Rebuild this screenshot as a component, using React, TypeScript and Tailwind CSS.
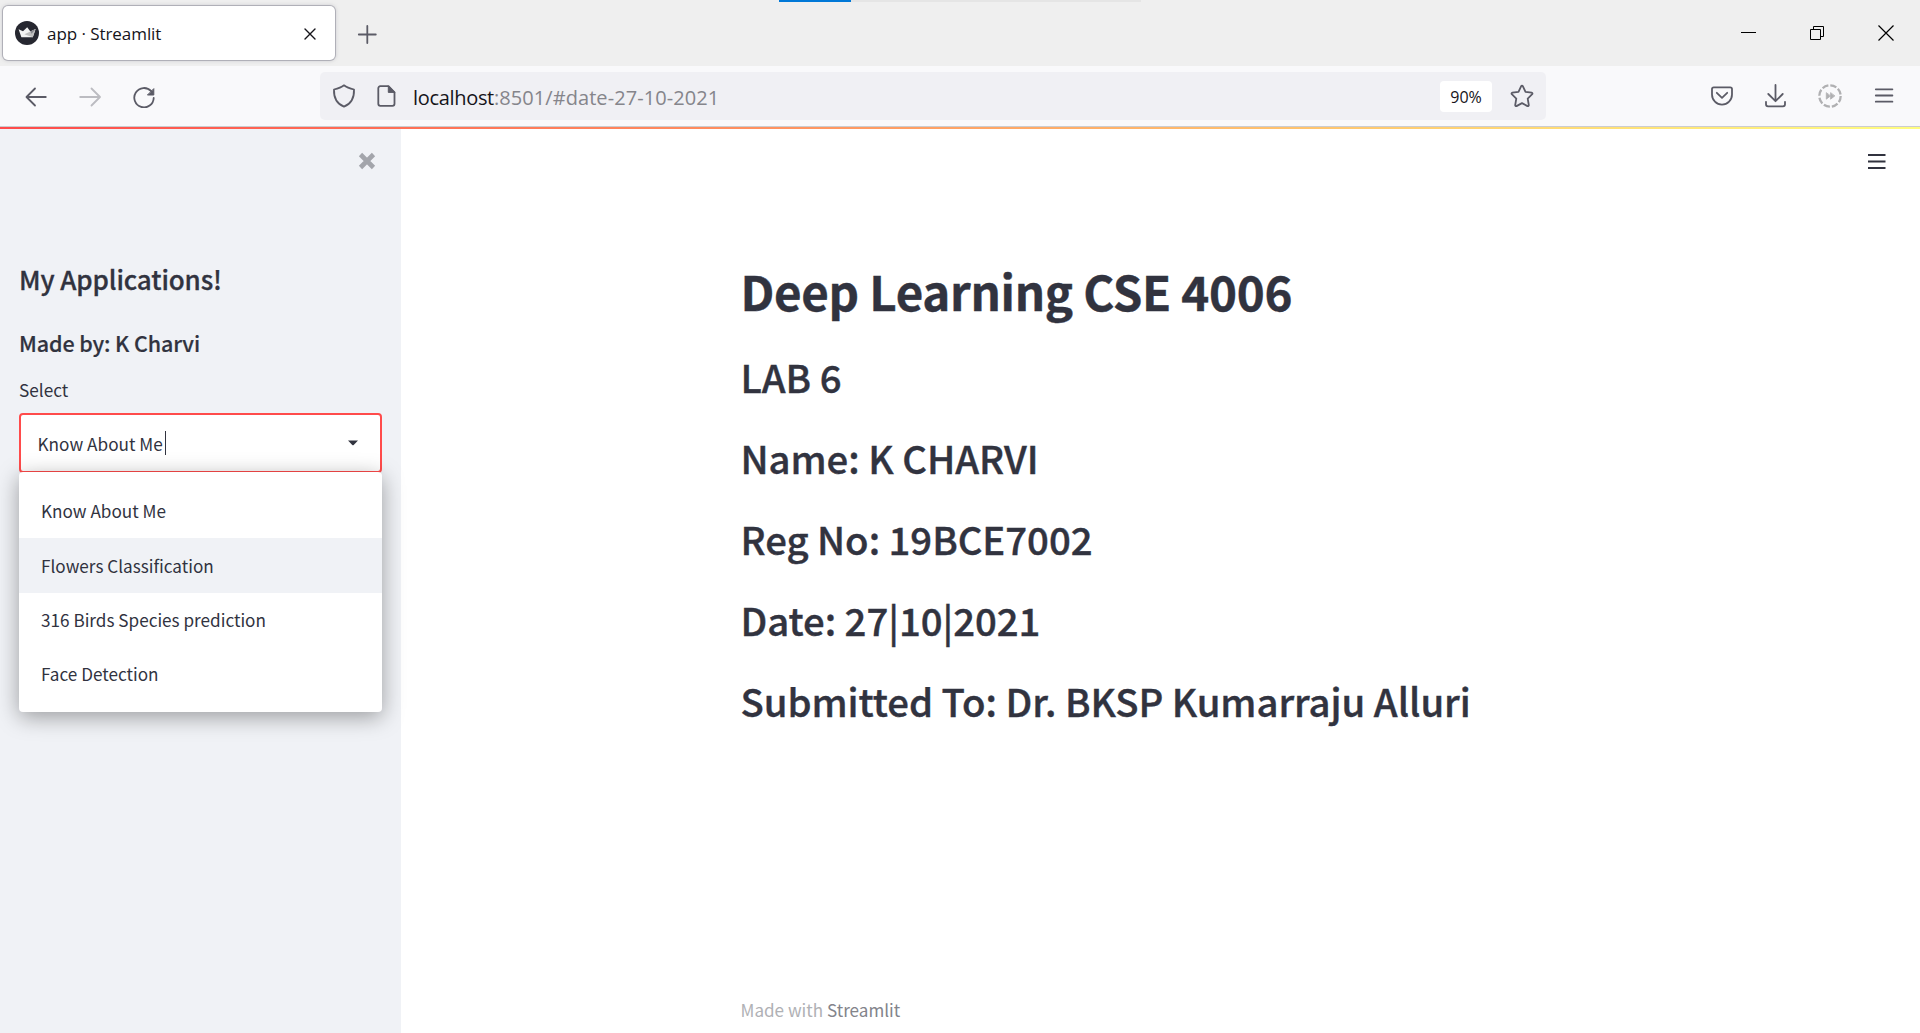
import type { ReactNode } from "react";

const HEADINGS = [
  "LAB 6",
  "Name: K CHARVI",
  "Reg No: 19BCE7002",
  "Date: 27|10|2021",
  "Submitted To: Dr. BKSP Kumarraju Alluri",
];

const OPTIONS = ["Know About Me", "Flowers Classification", "316 Birds Species prediction", "Face Detection"];
const HIGHLIGHTED = 1;

function Icon({ size = 24, className = "", children }: { size?: number; className?: string; children: ReactNode }) {
  return (
    <svg
      width={size}
      height={size}
      viewBox={`0 0 ${size} ${size}`}
      fill="none"
      stroke="currentColor"
      strokeWidth="1.8"
      strokeLinecap="round"
      strokeLinejoin="round"
      className={`block shrink-0 ${className}`}
    >
      {children}
    </svg>
  );
}

function TabBar() {
  return (
    <div className="relative flex h-[66px] shrink-0 items-center bg-[#efefef]">
      <div className="absolute left-[779px] top-0 flex h-[2px] w-[362px] bg-[#e5e5e5]">
        <div className="w-[72px] bg-[#0078d7]" />
      </div>
      <div className="ml-[3px] flex h-[54px] w-[332px] items-center rounded-[5px] bg-white pl-3 pr-[18px] shadow-[0_0_0_1px_rgba(128,128,142,0.45),0_0_4px_rgba(128,128,142,0.5)]">
        <svg width="24" height="24" viewBox="0 0 24 24" className="block shrink-0">
          <circle cx="12" cy="12" r="12" fill="#262730" />
          <path d="M3.6 8.2 8 10.2 12.2 6.2 15.4 10.4 20.6 8 17.8 16.2H6.4Z" fill="#f2f2f2" />
          <path d="M15.4 10.4 20.6 8 17.8 16.2 9.4 13.2Z" fill="#bdbdbd" />
          <path d="M15.4 10.4 20.6 8 16.6 12.8Z" fill="#85868c" />
        </svg>
        <span className="ml-2 pt-[2px] text-[17px] leading-6 tracking-[-0.06px] text-[#15141a]">app · Streamlit</span>
        <Icon size={14} className="ml-auto mt-px text-[#15141a]">
          <path d="M2 2 12 12M12 2 2 12" strokeWidth="1.4" />
        </Icon>
      </div>
      <Icon size={20} className="ml-[22px] mt-px text-[#5b5b66]">
        <path d="M10.3 2v17M1.8 10.5h17" />
      </Icon>
      <div className="ml-auto flex items-center pr-[25px] text-black">
        <svg width="16" height="16" viewBox="0 0 16 16" className="block">
          <path d="M1 7.5h15" stroke="currentColor" />
        </svg>
        <svg width="16" height="16" viewBox="0 0 16 16" fill="none" stroke="currentColor" className="ml-[53px] block">
          <path d="M1.5 4.5h10v10h-10zM4.5 4.5v-3h10v10h-3" />
        </svg>
        <svg width="18" height="18" viewBox="0 0 18 18" fill="none" stroke="currentColor" strokeWidth="1.2" className="ml-[52px] block">
          <path d="M1.5 1.5l15 15M16.5 1.5l-15 15" />
        </svg>
      </div>
    </div>
  );
}

function Toolbar() {
  return (
    <div className="flex h-[61px] shrink-0 items-center border-b border-[#cccccf] bg-[#f9f9fb] text-[#5b5b66]">
      <Icon className="ml-6">
        <path d="M21.8 13H2.8M11 4.5 2.5 13l8.5 8.5" />
      </Icon>
      <Icon className="ml-[30px] text-[#bcbcc1]">
        <path d="M2.2 13H21M13.5 4.5 22 13l-8.5 8.5" />
      </Icon>
      <Icon className="ml-[30px]">
        <path d="M19.2 7.2A9.7 9.7 0 1 0 21.7 14" />
        <path d="M21.8 5v6h-6z" fill="currentColor" strokeWidth="1" />
      </Icon>
      <div className="ml-[164px] flex h-12 w-[1226px] items-center rounded-[5px] bg-[#f0f0f4] pl-3 pr-3">
        <Icon>
          <path d="M12 1.3c3 2.3 6 3.2 10 4.2.3 7-2.3 14-10 17.2C4.3 19.5 1.7 12.5 2 5.5c4-1 7-1.9 10-4.2z" />
        </Icon>
        <Icon className="ml-[18px]">
          <path d="M14.5 2.2H6.3a2 2 0 0 0-2 2v15.6a2 2 0 0 0 2 2h12.2a2 2 0 0 0 2-2V8.3z" />
          <path d="M14.3 2.2v6.2h6.2z" fill="currentColor" strokeWidth="1" />
        </Icon>
        <span className="ml-[15px] pt-[3px] text-[20px] leading-7 tracking-[0.07px] text-[#85858b]">
          <span className="tracking-[-0.32px] text-[#15141a]">localhost</span>:8501/#date-27-10-2021
        </span>
        <span className="ml-auto flex h-[31px] w-[52px] items-center justify-center rounded-[4px] bg-white pt-[2px] text-[16px] text-[#15141a]">
          90%
        </span>
        <Icon className="ml-[18px]">
          <path d="M12 1.6a.9.9 0 0 1 .8.5l2.7 5.7 6.2.9a.9.9 0 0 1 .5 1.5l-4.5 4.5 1.1 6.5a.9.9 0 0 1-1.3.9L12 19.1l-5.5 3a.9.9 0 0 1-1.3-.9l1.1-6.5-4.5-4.5a.9.9 0 0 1 .5-1.5l6.2-.9 2.7-5.7a.9.9 0 0 1 .8-.5z" />
        </Icon>
      </div>
      <Icon className="ml-auto">
        <path d="M3.8 3.3h16.4a1.8 1.8 0 0 1 1.8 1.8v5.5a10 10 0 0 1-20 0V5.1a1.8 1.8 0 0 1 1.8-1.8z" />
        <path d="M6.8 8.8 12 13.8l5.2-5" />
      </Icon>
      <Icon className="ml-[30px]">
        <path d="M11.5 0.9v16M4.3 10l7.2 7.2L18.7 10M2 17.8v2.5a2 2 0 0 0 2 2h15a2 2 0 0 0 2-2v-2.5" />
      </Icon>
      <Icon className="ml-[30px] text-[#b0b0b2]">
        <circle cx="12" cy="12" r="10.7" strokeWidth="2.3" strokeLinecap="butt" strokeDasharray="6.4 2.003" />
        <path d="M8.3 9v6.2l4-3.1zM12.6 9v6.2l4-3.1z" fill="currentColor" strokeWidth="0.8" />
      </Icon>
      <Icon className="ml-[30px] mr-[24px]">
        <path d="M3.8 5.3h16.6M3.8 11.5h16.6M3.8 17.7h16.6" />
      </Icon>
    </div>
  );
}

function SelectBox() {
  return (
    <div className="relative mt-[11px]">
      <div className="flex h-[60px] items-center rounded-[4px] border-2 border-[#ff4b4b] bg-white pl-[16.5px] pr-[21px]">
        <span className="pt-px text-[17.2px] leading-6">Know About Me</span>
        <span className="ml-[2.5px] h-6 w-px bg-[#31333f]" />
        <svg width="12" height="6" viewBox="0 0 12 6" className="ml-auto block">
          <path d="M1 .5h10L6.7 5a1 1 0 0 1-1.4 0z" fill="#31333f" />
        </svg>
      </div>
      <ul className="absolute inset-x-0 top-[59px] rounded-[4px] bg-white pb-[10px] pt-3 shadow-[0_5px_22px_rgba(0,0,0,0.36)]">
        {OPTIONS.map((option, i) => (
          <li
            key={option}
            className={`flex h-[54.4px] items-center pl-[22px] text-[17.15px] leading-6 ${i === HIGHLIGHTED ? "bg-[#f0f2f6]" : ""}`}
          >
            {option}
          </li>
        ))}
      </ul>
    </div>
  );
}

function Sidebar() {
  return (
    <aside className="flex w-[401px] shrink-0 flex-col bg-[#f0f2f6] px-[19px]">
      <svg width="18" height="18" viewBox="0 0 18 18" className="ml-auto mr-[6px] mt-[25px] block">
        <path d="M2.5 2.5l13 13M15.5 2.5l-13 13" stroke="#a3a5ab" strokeWidth="4.6" />
      </svg>
      <h2 className="mt-[89px] text-[26px] font-medium leading-10 tracking-[-0.12px] [-webkit-text-stroke:0.3px_#31333f]">
        My Applications!
      </h2>
      <h3 className="mt-[28px] text-[21.5px] font-medium leading-8 tracking-[-0.12px] [-webkit-text-stroke:0.2px_#31333f]">
        Made by: K Charvi
      </h3>
      <label className="mt-[19px] text-[17.2px] leading-6">Select</label>
      <SelectBox />
    </aside>
  );
}

export default function App() {
  return (
    <div className="flex h-[1033px] w-[1920px] flex-col overflow-hidden bg-white font-['Open_Sans',sans-serif]">
      <TabBar />
      <Toolbar />
      <div className="relative flex flex-1 font-['Noto_Sans_CJK_SC',sans-serif] text-[#31333f]">
        <div className="absolute inset-x-0 top-0 z-10 h-[2px] bg-[linear-gradient(90deg,#ff4b4b,#fffd80)]" />
        <Sidebar />
        <main className="relative flex flex-1 flex-col pl-[339.5px]">
          <svg width="18" height="16" viewBox="0 0 18 16" className="absolute right-[34px] top-[27px]">
            <path d="M0 1h17.5M0 7.5h17.5M0 14h17.5" stroke="#31333f" strokeWidth="1.9" />
          </svg>
          <h1 className="mt-[134px] text-[47.5px] font-bold leading-[60px] tracking-[-0.33px] [-webkit-text-stroke:0.4px_#31333f]">
            Deep Learning CSE 4006
          </h1>
          <div className="mt-[15px] text-[38.3px] font-medium leading-[81px] tracking-[-0.04px] [-webkit-text-stroke:0.4px_#31333f]">
            {HEADINGS.map((heading) => (
              <h2 key={heading}>{heading}</h2>
            ))}
          </div>
          <footer className="mb-[11px] mt-auto text-[17.1px] leading-6 text-[#b0b1b5]">
            Made with <span className="text-[#83848b]">Streamlit</span>
          </footer>
        </main>
      </div>
    </div>
  );
}
